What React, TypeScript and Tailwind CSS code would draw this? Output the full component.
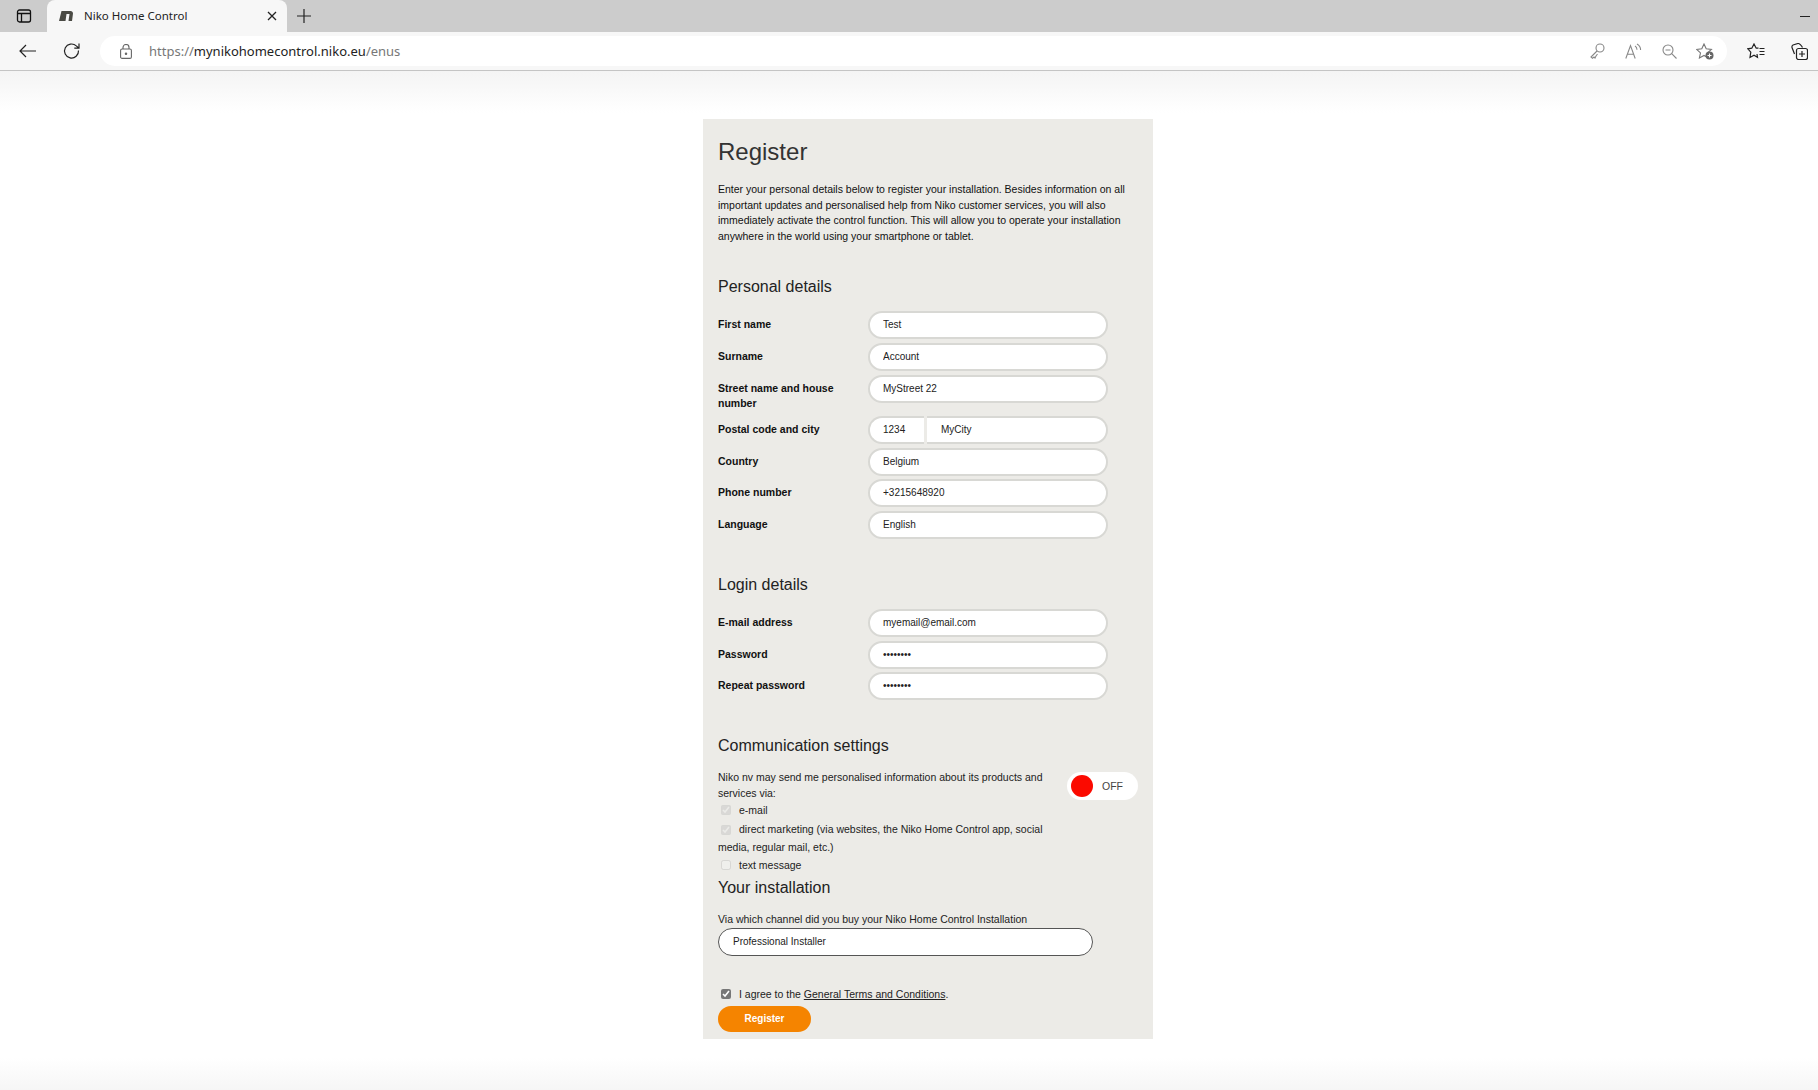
import type { ReactNode } from "react"

const sans = "font-['Liberation_Sans',Arial,sans-serif]"

function Field({ value, type = "text" }: { value: string; type?: string }) {
  return (
    <input
      readOnly
      type={type}
      defaultValue={value}
      className="h-[28px] w-[240px] rounded-[14px] border-2 border-[#d8d8d4] bg-white pl-[13px] text-[10px] text-[#222] outline-none"
    />
  )
}

function Row({ label, className, children }: { label: string; className: string; children: ReactNode }) {
  return (
    <div className={`flex items-start ${className}`}>
      <label className="w-[150px] pt-[6px] pr-[20px] text-[10.500px] leading-[15px] font-bold text-[#111]">{label}</label>
      {children}
    </div>
  )
}

function Heading({ children, className }: { children: ReactNode; className: string }) {
  return <h2 className={`text-[16px] leading-[20px] text-[#222] ${className}`}>{children}</h2>
}

function BrowserChrome() {
  return (
    <header className="font-['Noto_Sans',sans-serif]">
      <div className="flex h-[32px] items-center bg-[#cccccc]">
        <div className="flex w-[47px] justify-center">
          <svg width="16" height="16" viewBox="0 0 16 16" fill="none" stroke="#111" strokeWidth="1.3">
            <rect x="1.5" y="2" width="13" height="12" rx="2" />
            <path d="M1.5 5.5h13M5.5 5.5V14" />
          </svg>
        </div>
        <div className="flex h-[32px] w-[240px] items-center rounded-t-[8px] bg-[#f7f7f7] pl-[12px]">
          <svg width="14" height="12" viewBox="0 0 14 12">
            <path d="M2.5 1H11.5C13 1 14 2 14 3.5L13 11H9.500L10.500 4H7.500L6.500 11H0Z" fill="#4a4a44" />
          </svg>
          <span className="ml-[11px] text-[11.500px] text-[#222]">Niko Home Control</span>
          <svg className="ml-auto mr-[10px]" width="10" height="10" viewBox="0 0 10 10" stroke="#222" strokeWidth="1.3">
            <path d="M1 1l8 8M9 1l-8 8" />
          </svg>
        </div>
        <svg className="ml-[10px]" width="14" height="14" viewBox="0 0 14 14" stroke="#222" strokeWidth="1.2">
          <path d="M7 0v14M0 7h14" />
        </svg>
        <div className="ml-auto mr-[8px] h-[1px] w-[10px] bg-[#222]" />
      </div>
      <div className="flex h-[39px] items-center border-b border-[#c4c4c4] bg-[#f7f7f7]">
        <svg className="ml-[19px]" width="18" height="14" viewBox="0 0 18 14" fill="none" stroke="#222" strokeWidth="1.2">
          <path d="M17 7H1M7 1L1 7l6 6" />
        </svg>
        <svg className="ml-[26px]" width="18" height="18" viewBox="0 0 18 18" fill="none" stroke="#222" strokeWidth="1.2">
          <path d="M15.500 8.500a7 7 0 1 1-2.200-4.600L16 6.200M16 1.500v4.700h-4.700" />
        </svg>
        <div className="ml-[19px] flex h-[30px] w-[1627px] items-center rounded-full bg-white">
          <svg className="ml-[20px]" width="12" height="15" viewBox="0 0 12 15" fill="none" stroke="#666" strokeWidth="1.1">
            <rect x="0.6" y="5" width="10.8" height="9.4" rx="1.5" />
            <path d="M3 5V3.500a3 3 0 0 1 6 0V5" />
            <circle cx="6" cy="9.700" r="0.7" fill="#666" />
          </svg>
          <span className="ml-[17px] mt-[2px] text-[13px] text-[#777]">
            https://<span className="text-[#222]">mynikohomecontrol.niko.eu</span>/enus
          </span>
          <svg className="ml-auto" width="15" height="16" viewBox="0 0 15 16" fill="none" stroke="#888" strokeWidth="1.1">
            <circle cx="10" cy="5" r="4" />
            <path d="M7 8L1 14l1.500 1.200L4 14l1 1 1-2 1.500-2" />
          </svg>
          <svg className="ml-[20px]" width="17" height="16" viewBox="0 0 17 16" fill="none" stroke="#888" strokeWidth="1.1">
            <path d="M.8 15.500L5.500 2.500 10.200 15.500M2.300 11.300h6.400M10 3c1.300.8 2 2.100 2 3.700M12 1c2.300 1.300 3.600 3.400 3.600 6" />
          </svg>
          <svg className="ml-[20px]" width="15" height="15" viewBox="0 0 15 15" fill="none" stroke="#888" strokeWidth="1.1">
            <circle cx="6" cy="6" r="5" />
            <path d="M9.700 9.700L14.500 14.500M3.500 6h5" />
          </svg>
          <svg className="ml-[19px] mr-[13px]" width="18" height="17" viewBox="0 0 18 17" fill="none" stroke="#777" strokeWidth="1.1">
            <path d="M8 1l2.200 4.800 5.200.6-3.900 3.500 1.100 5.100L8 12.400 3.400 15l1.100-5.100L.6 6.400l5.200-.6Z" />
            <circle cx="13.500" cy="12.500" r="4" fill="#666" stroke="none" />
            <path d="M13.500 10.500v4M11.500 12.500h4" stroke="#fff" />
          </svg>
        </div>
        <svg className="ml-[20px]" width="18" height="16" viewBox="0 0 18 16" fill="none" stroke="#222" strokeWidth="1.2">
          <path d="M11.500 5.200H9.200L7 1 4.800 5.200.8 5.800l3 3.400L3 14.500l4-2.200 3.500 2-.5-3.300" />
          <path d="M12.500 5.500h5M12.500 8.500h5M12.500 11.500h5" />
        </svg>
        <svg className="ml-[26px]" width="17" height="17" viewBox="0 0 17 17" fill="none" stroke="#222" strokeWidth="1.2">
          <path d="M3.500 11L1 4.500C.8 3.500 1 2.500 2 2l5-1.500c1.200-.3 3.500 2 4.500 4" />
          <rect x="5.500" y="5.500" width="11" height="11" rx="2" />
          <path d="M11 8v6M8 11h6" />
        </svg>
      </div>
    </header>
  )
}

export default function App() {
  return (
    <div className={`flex h-[1090px] flex-col overflow-hidden bg-white ${sans}`}>
      <BrowserChrome />
      <main className="flex-1 bg-[linear-gradient(to_bottom,#f4f4f4_0,#ffffff_42px,#ffffff_calc(100%-32px),#f6f6f6_100%)] pt-[48px]">
        <form className="ml-[703px] h-[920px] w-[450px] bg-[#ecebe7] px-[15px] pt-[19px]">
          <h1 className="text-[24px] leading-[28px] text-[#333]">Register</h1>
          <p className="mt-[16px] w-[415px] text-[10.500px] leading-[15.700px] text-[#111]">
            Enter your personal details below to register your installation. Besides information on all important
            updates and personalised help from Niko customer services, you will also immediately activate the control
            function. This will allow you to operate your installation anywhere in the world using your smartphone or
            tablet.
          </p>

          <Heading className="mt-[32px]">Personal details</Heading>
          <Row label="First name" className="mt-[14px]"><Field value="Test" /></Row>
          <Row label="Surname" className="mt-[4px]"><Field value="Account" /></Row>
          <Row label="Street name and house number" className="mt-[4px]"><Field value="MyStreet 22" /></Row>
          <Row label="Postal code and city" className="mt-[5px]">
            <div className="flex w-[240px] gap-[3px]">
              <input readOnly defaultValue="1234" className="h-[28px] w-[56px] rounded-l-[14px] border-y-2 border-l-2 border-[#d8d8d4] bg-white pl-[13px] text-[10px] text-[#222] outline-none" />
              <input readOnly defaultValue="MyCity" className="h-[28px] w-[181px] rounded-r-[14px] border-y-2 border-r-2 border-[#d8d8d4] bg-white pl-[14px] text-[10px] text-[#222] outline-none" />
            </div>
          </Row>
          <Row label="Country" className="mt-[4px]"><Field value="Belgium" /></Row>
          <Row label="Phone number" className="mt-[3px]"><Field value="+3215648920" /></Row>
          <Row label="Language" className="mt-[4px]"><Field value="English" /></Row>

          <Heading className="mt-[36px]">Login details</Heading>
          <Row label="E-mail address" className="mt-[14px]"><Field value="myemail@email.com" /></Row>
          <Row label="Password" className="mt-[4px]"><Field value="password" type="password" /></Row>
          <Row label="Repeat password" className="mt-[3px]"><Field value="password" type="password" /></Row>

          <Heading className="mt-[36px]">Communication settings</Heading>
          <div className="mt-[13px] flex items-start text-[10.500px] leading-[16px] text-[#222]">
            <div className="w-[330px]">
              <p>Niko nv may send me personalised information about its products and services via:</p>
              <label className="mt-[1px] flex items-center">
                <input type="checkbox" disabled defaultChecked className="mx-[3px] h-[10px] w-[10px] opacity-60" />
                <span className="ml-[5px]">e-mail</span>
              </label>
              <label className="mt-[2px] block leading-[18.500px]">
                <input type="checkbox" disabled defaultChecked className="mx-[3px] h-[10px] w-[10px] align-middle opacity-60" />
                <span className="ml-[5px]">direct marketing (via websites, the Niko Home Control app, social media, regular mail, etc.)</span>
              </label>
              <label className="flex items-center">
                <input type="checkbox" disabled className="mx-[3px] h-[10px] w-[10px] opacity-60" />
                <span className="ml-[5px]">text message</span>
              </label>
            </div>
            <div className="ml-[19px] mt-[3px] flex h-[28px] w-[71px] items-center rounded-full bg-white pl-[4px]">
              <span className="h-[22px] w-[22px] rounded-full bg-[#fb0a00]" />
              <span className="ml-[9px] text-[10.500px] text-[#444]">OFF</span>
            </div>
          </div>

          <Heading className="mt-[5px]">Your installation</Heading>
          <p className="mt-[13px] text-[10.500px] leading-[16px] text-[#222]">Via which channel did you buy your Niko Home Control Installation</p>
          <input
            readOnly
            defaultValue="Professional Installer"
            className="mt-[1px] block h-[28px] w-[375px] rounded-[14px] border border-[#555] bg-white pl-[14px] text-[10px] text-[#222] outline-none"
          />
          <label className="mt-[30px] flex items-center text-[10.500px] leading-[16px] text-[#222]">
            <input type="checkbox" defaultChecked className="mx-[3px] h-[10px] w-[10px] accent-[#777]" />
            <span className="ml-[5px]">
              I agree to the <span className="underline">General Terms and Conditions</span>.
            </span>
          </label>
          <button type="button" className="mt-[4px] block h-[26px] w-[93px] rounded-full bg-[#f58400] text-[10px] font-bold text-white">
            Register
          </button>
        </form>
      </main>
    </div>
  )
}
